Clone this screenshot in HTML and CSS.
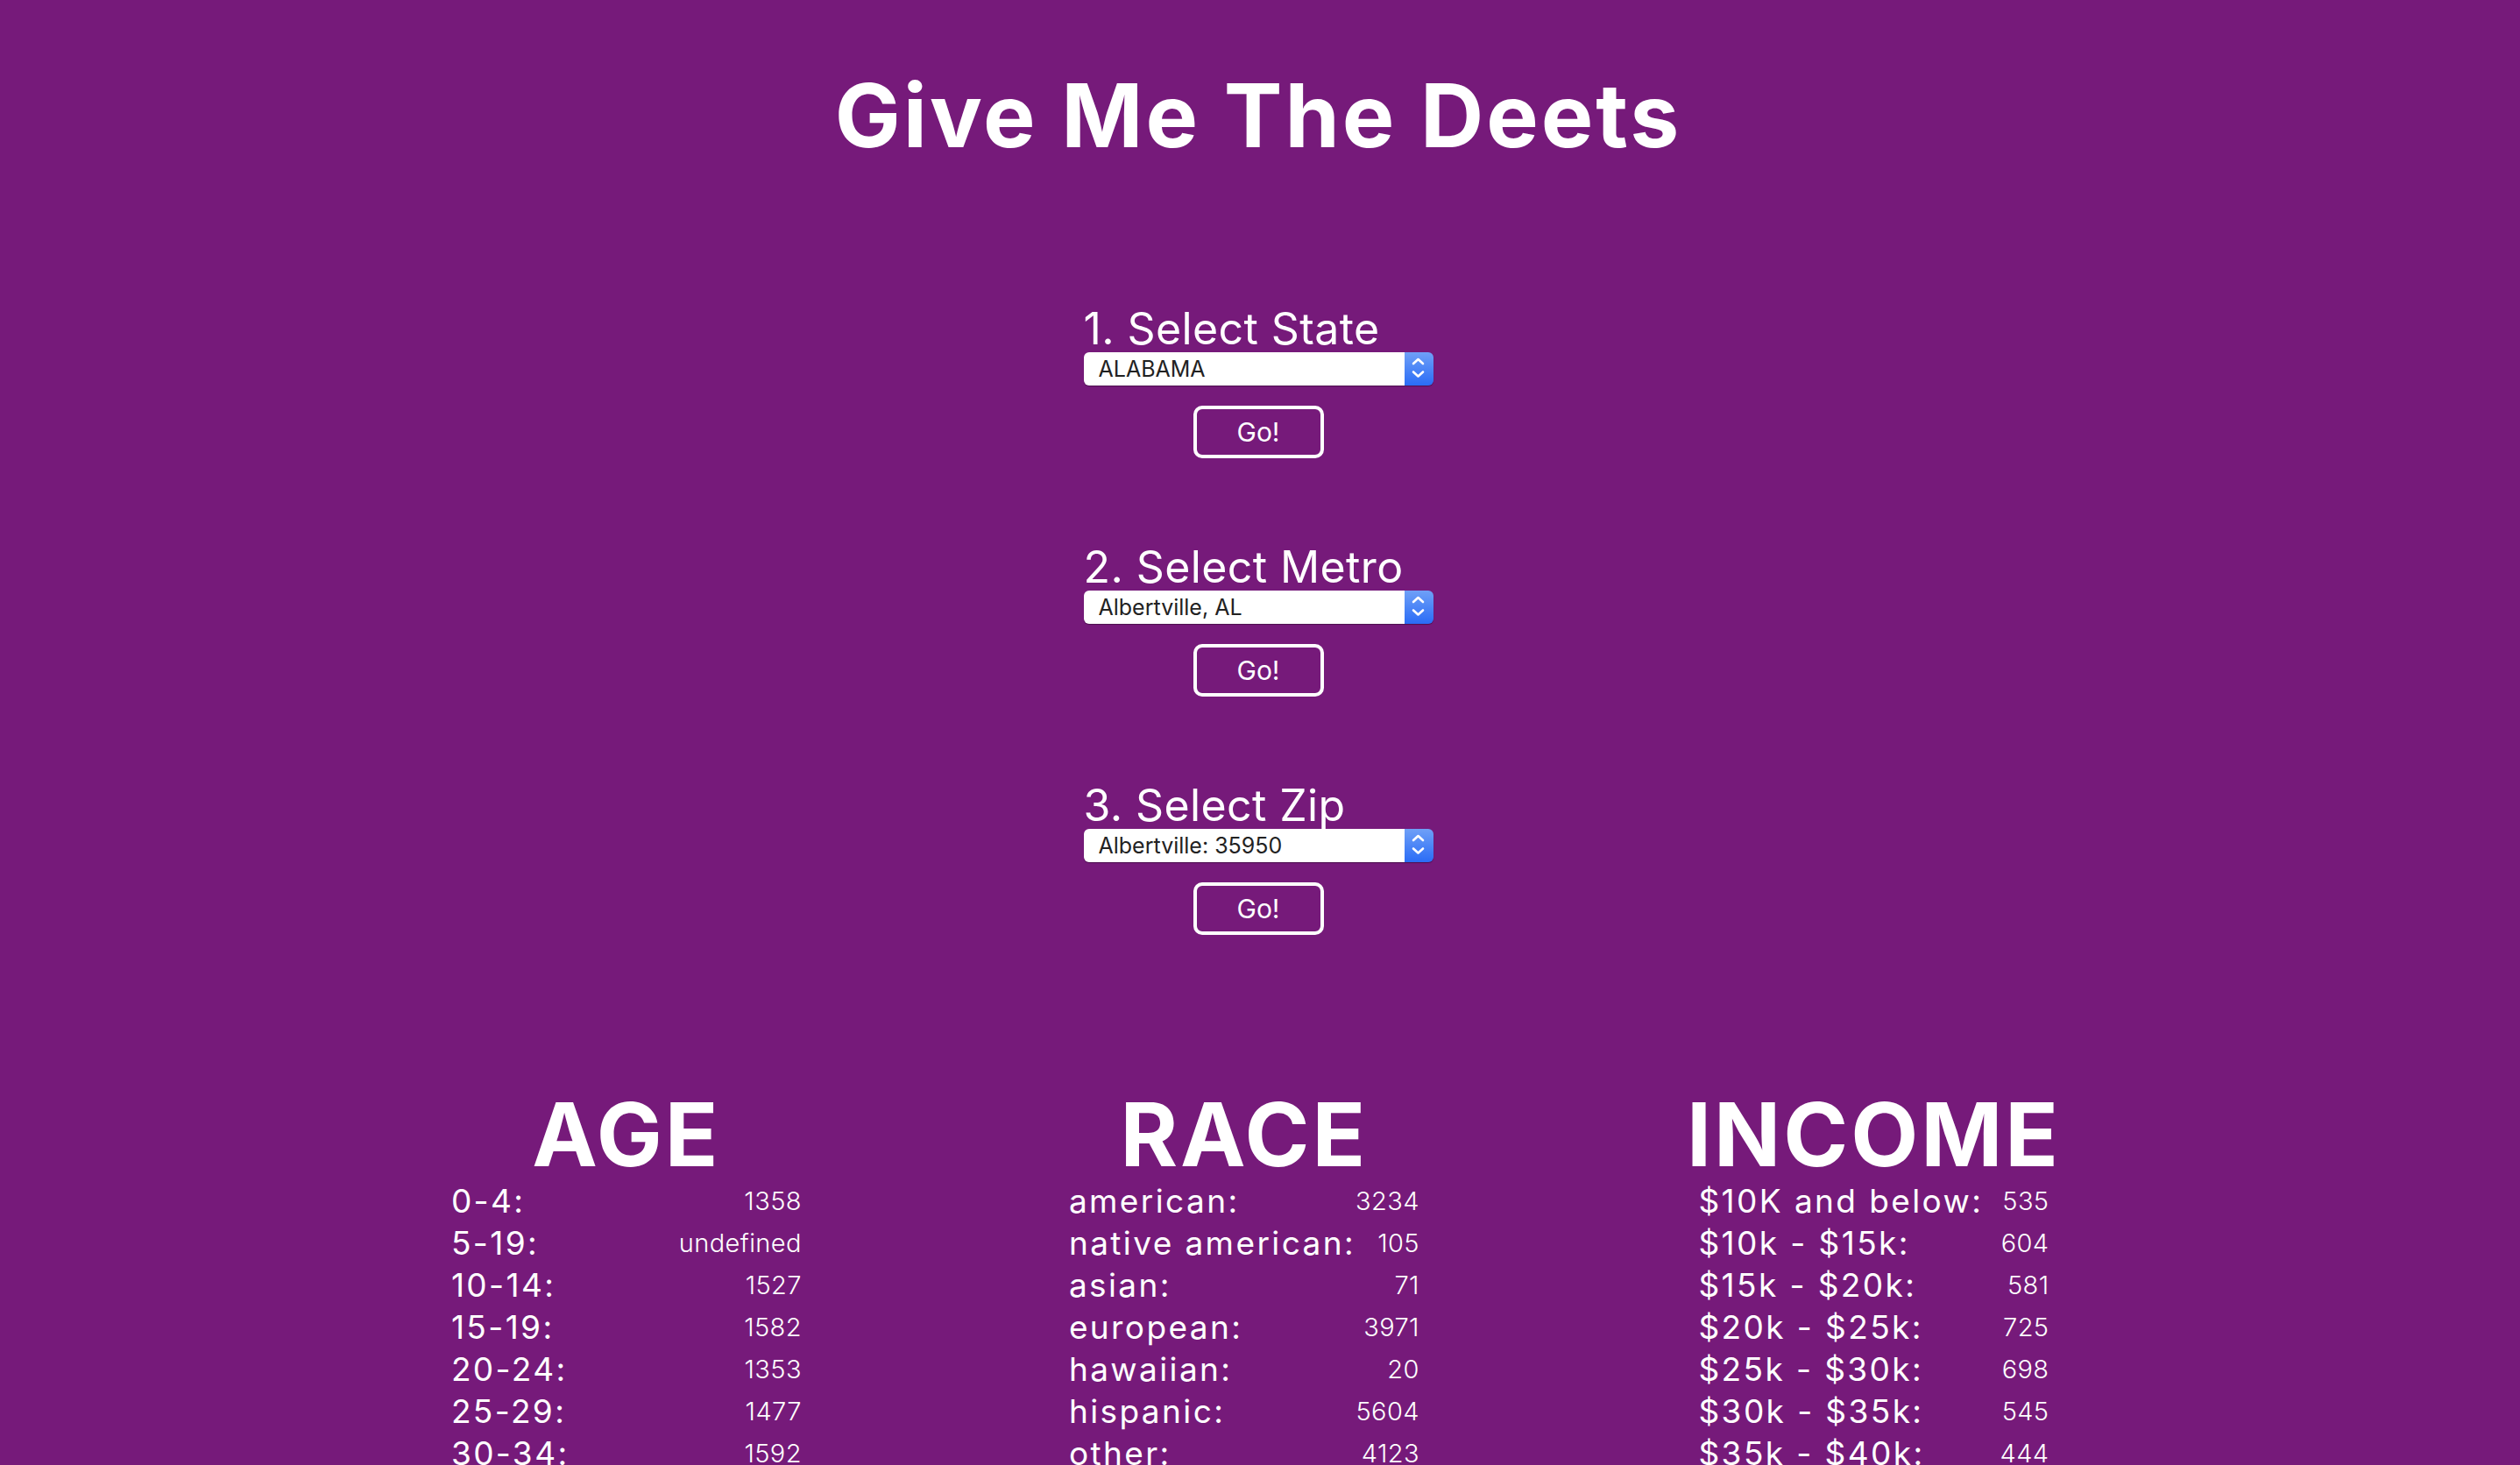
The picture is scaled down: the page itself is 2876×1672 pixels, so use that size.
FILE: index.html
```html
<!DOCTYPE html>
<html lang="en">
<head>
<meta charset="utf-8">
<title>Give Me The Deets</title>
<link rel="stylesheet" href="styles.css">
</head>
<body>
<h1 class="title">Give Me The Deets</h1>

<main class="pickers">
  <section class="picker">
    <h2 class="picker-label">1. Select State</h2>
    <div class="select-box">
      <select class="select"><option>ALABAMA</option></select>
      <span class="stepper"><svg width="33" height="38" viewBox="0 0 33 38"><path d="M10 13 L15.5 8 L21 13 M10 22.5 L15.5 27.5 L21 22.5" fill="none" stroke="#fff" stroke-width="2.6" stroke-linecap="round" stroke-linejoin="round"/></svg></span>
    </div>
    <button class="go">Go!</button>
  </section>

  <section class="picker">
    <h2 class="picker-label">2. Select Metro</h2>
    <div class="select-box">
      <select class="select"><option>Albertville, AL</option></select>
      <span class="stepper"><svg width="33" height="38" viewBox="0 0 33 38"><path d="M10 13 L15.5 8 L21 13 M10 22.5 L15.5 27.5 L21 22.5" fill="none" stroke="#fff" stroke-width="2.6" stroke-linecap="round" stroke-linejoin="round"/></svg></span>
    </div>
    <button class="go">Go!</button>
  </section>

  <section class="picker">
    <h2 class="picker-label">3. Select Zip</h2>
    <div class="select-box">
      <select class="select"><option>Albertville: 35950</option></select>
      <span class="stepper"><svg width="33" height="38" viewBox="0 0 33 38"><path d="M10 13 L15.5 8 L21 13 M10 22.5 L15.5 27.5 L21 22.5" fill="none" stroke="#fff" stroke-width="2.6" stroke-linecap="round" stroke-linejoin="round"/></svg></span>
    </div>
    <button class="go">Go!</button>
  </section>
</main>

<div class="stats">
  <section class="stat">
    <h3 class="stat-title">AGE</h3>
    <div class="stat-rows">
      <span class="k">0-4:</span><span class="v">1358</span>
      <span class="k">5-19:</span><span class="v">undefined</span>
      <span class="k">10-14:</span><span class="v">1527</span>
      <span class="k">15-19:</span><span class="v">1582</span>
      <span class="k">20-24:</span><span class="v">1353</span>
      <span class="k">25-29:</span><span class="v">1477</span>
      <span class="k">30-34:</span><span class="v">1592</span>
    </div>
  </section>
  <section class="stat">
    <h3 class="stat-title">RACE</h3>
    <div class="stat-rows">
      <span class="k">american:</span><span class="v">3234</span>
      <span class="k">native american:</span><span class="v">105</span>
      <span class="k">asian:</span><span class="v">71</span>
      <span class="k">european:</span><span class="v">3971</span>
      <span class="k">hawaiian:</span><span class="v">20</span>
      <span class="k">hispanic:</span><span class="v">5604</span>
      <span class="k">other:</span><span class="v">4123</span>
    </div>
  </section>
  <section class="stat">
    <h3 class="stat-title">INCOME</h3>
    <div class="stat-rows">
      <span class="k">$10K and below:</span><span class="v">535</span>
      <span class="k">$10k - $15k:</span><span class="v">604</span>
      <span class="k">$15k - $20k:</span><span class="v">581</span>
      <span class="k">$20k - $25k:</span><span class="v">725</span>
      <span class="k">$25k - $30k:</span><span class="v">698</span>
      <span class="k">$30k - $35k:</span><span class="v">545</span>
      <span class="k">$35k - $40k:</span><span class="v">444</span>
    </div>
  </section>
</div>
</body>
</html>
```
FILE: styles.css
```css
html, body {
  margin: 0;
  background: #761a7a;
}
body {
  padding: 0 4px 0 0;
  color: #fff;
  font-family: Inter, "Noto Sans", sans-serif;
}

.title {
  margin: 82px 0 0;
  font-size: 100px;
  line-height: 100px;
  font-weight: 700;
  letter-spacing: 3px;
  text-align: center;
}

.pickers {
  width: 399px;
  margin: 168px auto 0;
  display: flex;
  flex-direction: column;
  gap: 99px;
}
.picker {
  display: flex;
  flex-direction: column;
  align-items: flex-start;
}
.picker-label {
  margin: 0;
  font-size: 50px;
  line-height: 50px;
  font-weight: 400;
  letter-spacing: 0.4px;
  white-space: nowrap;
}
.select-box {
  margin-top: 2px;
  display: flex;
  width: 399px;
  height: 38px;
  border-radius: 6px;
  box-shadow: 0 1px 1px rgba(0, 0, 0, 0.35);
}
.select {
  appearance: none;
  -webkit-appearance: none;
  flex: 1;
  height: 38px;
  margin: 0;
  border: 0;
  border-radius: 6px 0 0 6px;
  background: #fff;
  color: #222;
  font-family: Inter, "Noto Sans", sans-serif;
  font-size: 25px;
  line-height: 38px;
  padding: 0 0 0 17px;
  outline: none;
}
.stepper {
  width: 33px;
  height: 38px;
  border-radius: 0 6px 6px 0;
  background: linear-gradient(#6fa0f7, #2a6cf6);
  display: flex;
}
.go {
  align-self: center;
  margin-top: 23px;
  width: 149px;
  height: 60px;
  box-sizing: border-box;
  border: 4px solid #fff;
  border-radius: 10px;
  background: transparent;
  color: #fff;
  font-family: Inter, "Noto Sans", sans-serif;
  font-size: 30px;
  line-height: 52px;
  padding: 0;
}

.stats {
  margin-top: 178px;
  padding-right: 5px;
  display: flex;
  justify-content: center;
  align-items: flex-start;
  gap: 305px;
}
.stat {
  display: flex;
  flex-direction: column;
  align-items: center;
}
.stat-title {
  margin: 0;
  font-size: 100px;
  line-height: 100px;
  font-weight: 700;
  letter-spacing: 3px;
  white-space: nowrap;
}
.stat-rows {
  margin-top: 2px;
  width: 400px;
  display: grid;
  grid-template-columns: 1fr auto;
  align-items: start;
  line-height: 48px;
}
.k {
  font-size: 37px;
  font-weight: 400;
  letter-spacing: 2.4px;
  white-space: nowrap;
}
.v {
  font-size: 29px;
  font-weight: 300;
  text-align: right;
  letter-spacing: 0.4px;
  white-space: nowrap;
}
```
